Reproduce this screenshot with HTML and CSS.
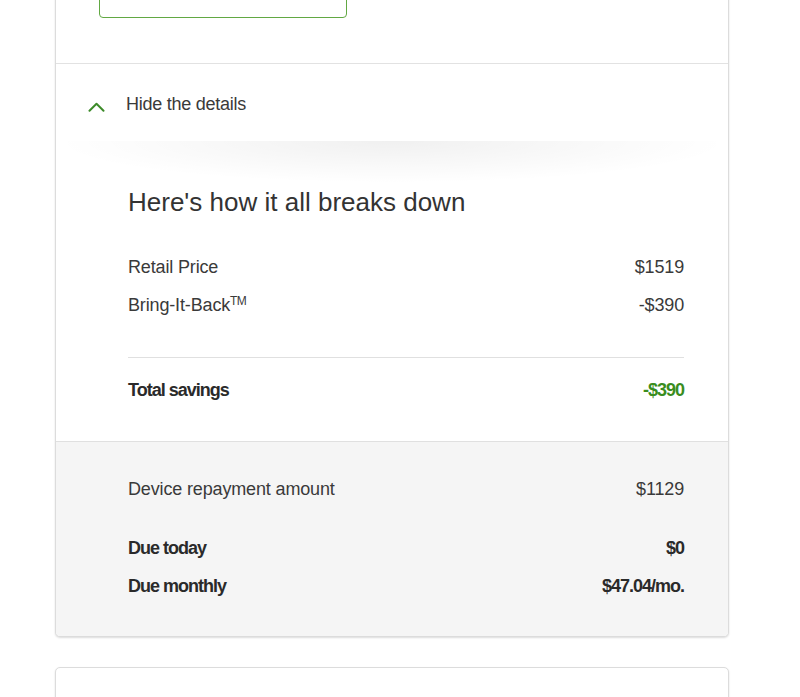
FILE: index.html
```html
<!DOCTYPE html>
<html lang="en">
<head>
<meta charset="utf-8">
<title>Breakdown</title>
<link rel="stylesheet" href="styles.css">
</head>
<body>
<div class="page">
  <section class="card">
    <div class="cta">
      <button class="outline-btn" type="button" aria-label="Continue"></button>
    </div>
    <div class="details">
      <div class="toggle">
        <svg class="chevron" width="17" height="10" viewBox="0 0 17 10" aria-hidden="true">
          <path d="M1.5 8.8 L8.5 1.8 L15.5 8.8" fill="none" stroke="#3d8b2a" stroke-width="2" stroke-linecap="round" stroke-linejoin="round"/>
        </svg>
        <span class="toggle-label">Hide the details</span>
      </div>
      <div class="shade"></div>
      <div class="breakdown">
        <h2 class="title">Here's how it all breaks down</h2>
        <div class="row"><span>Retail Price</span><span>$1519</span></div>
        <div class="row"><span>Bring-It-Back<sup class="tm">TM</sup></span><span>-$390</span></div>
        <div class="divider"></div>
        <div class="row bold"><span>Total savings</span><span class="green">-$390</span></div>
      </div>
      <div class="summary">
        <div class="row"><span>Device repayment amount</span><span>$1129</span></div>
        <div class="row bold gap-top"><span>Due today</span><span>$0</span></div>
        <div class="row bold"><span>Due monthly</span><span>$47.04/mo.</span></div>
      </div>
    </div>
  </section>
  <section class="card next"></section>
</div>
</body>
</html>
```

FILE: styles.css
```css
html, body {
  margin: 0;
  padding: 0;
  background: #ffffff;
}

body {
  font-family: "Liberation Sans", Arial, sans-serif;
  color: #363636;
  overflow: hidden;
  height: 697px;
}

.page {
  width: 674px;
  margin-left: 55px;
  margin-top: -60px;
}

.card {
  border: 1px solid #dcdcdc;
  border-radius: 5px;
  background: #ffffff;
  box-shadow: 0 1px 2px rgba(0, 0, 0, 0.14);
  overflow: hidden;
}

.cta {
  padding: 29px 0 45px 43px;
}

.outline-btn {
  display: block;
  width: 248px;
  height: 48px;
  border: 1.5px solid #62a843;
  border-radius: 4px;
  background: #ffffff;
  padding: 0;
}

.details {
  border-top: 1px solid #e2e2e2;
}

.toggle {
  display: flex;
  align-items: center;
  gap: 21px;
  padding: 28px 0 25px 32px;
  height: 24px;
}

.chevron {
  display: block;
  margin-top: 5px;
}

.toggle-label {
  font-size: 18px;
  line-height: 24px;
  letter-spacing: -0.25px;
  color: #3a3a3a;
}

.shade {
  height: 42px;
  margin: 0 12px -42px;
  background: radial-gradient(ellipse 52% 100% at 50% 0, rgba(0, 0, 0, 0.06), rgba(0, 0, 0, 0) 100%);
}

.breakdown {
  padding: 45px 44px 39px 72px;
}

.title {
  margin: 0 0 37px;
  font-size: 26px;
  line-height: 32px;
  font-weight: normal;
  letter-spacing: 0;
  color: #333333;
}

.row {
  display: flex;
  justify-content: space-between;
  font-size: 18px;
  line-height: 24px;
  letter-spacing: -0.15px;
  color: #3a3a3a;
}

.row + .row {
  margin-top: 14px;
}

.row.bold {
  font-weight: bold;
  letter-spacing: -1px;
  color: #2a2a2a;
}

.tm {
  font-size: 12px;
  line-height: 0;
  vertical-align: 6px;
  letter-spacing: -0.6px;
  font-weight: normal;
}

.divider {
  height: 1px;
  background: #e0e0e0;
  margin: 40px 0 20px;
}

.green {
  color: #3a8d1e;
}

.summary {
  background: #f5f5f5;
  border-top: 1px solid #e0e0e0;
  padding: 35px 44px 38px 72px;
}

.summary .row + .row {
  margin-top: 14px;
}

.summary .row.gap-top {
  margin-top: 35px;
}

.next {
  margin-top: 30px;
  height: 200px;
}
```
